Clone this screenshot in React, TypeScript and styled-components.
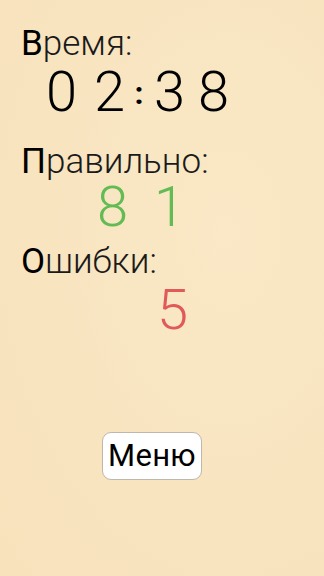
import React from "react";
import styled, { createGlobalStyle } from "styled-components";

const Global = createGlobalStyle`
  html, body { margin: 0; padding: 0; }
  body {
    background: #f9e6c3;
    font-family: Roboto, "Liberation Sans", sans-serif;
    -webkit-font-smoothing: antialiased;
  }
`;

const Screen = styled.div`
  width: 324px;
  height: 576px;
  box-sizing: border-box;
  padding-top: 26px;
  background: radial-gradient(ellipse at 70% 40%, #fae8c6 0%, #f8e4bf 60%, #f7e2bc 100%);
  display: flex;
  flex-direction: column;
  overflow: hidden;
`;

const Section = styled.section<{ $mt: number }>`
  display: flex;
  flex-direction: column;
  margin-top: ${(p) => p.$mt}px;
`;

const Label = styled.div`
  font-size: 35px;
  line-height: 35px;
  height: 35px;
  font-weight: 300;
  color: #1a1a1a;
  padding-left: 21px;
  white-space: nowrap;
`;

const Initial = styled.span`
  font-weight: 400;
  color: #000;
`;

const ValueRow = styled.div<{ $mt: number; $color: string }>`
  display: flex;
  align-items: flex-start;
  height: 56px;
  margin-top: ${(p) => p.$mt}px;
  font-size: 56px;
  line-height: 56px;
  font-weight: 300;
  color: ${(p) => p.$color};
`;

const Glyph = styled.span<{ $ml: number }>`
  display: inline-block;
  width: 30px;
  text-align: center;
  margin-left: ${(p) => p.$ml}px;
`;

const Colon = styled.span`
  display: inline-block;
  width: 30px;
  height: 24px;
  margin-top: 17px;
  font-size: 32px;
  line-height: 24px;
  font-weight: 700;
  text-align: center;
`;

const ButtonRow = styled.div`
  display: flex;
  margin-top: 94px;
  padding-left: 102px;
`;

const MenuButton = styled.button`
  width: 100px;
  height: 48px;
  box-sizing: border-box;
  background: #fff;
  border: 1px solid #bdb8ae;
  border-radius: 9px;
  font-family: Roboto, "Liberation Sans", sans-serif;
  font-size: 31px;
  font-weight: 400;
  letter-spacing: 0.3px;
  color: #000;
  padding: 0 0 2px 0;
  display: flex;
  align-items: center;
  justify-content: center;
`;

export default function App() {
  return (
    <>
      <Global />
      <Screen>
        <Section $mt={0}>
          <Label>
            <Initial>В</Initial>ремя:
          </Label>
          <ValueRow $mt={3} $color="#000">
            <Glyph $ml={46}>0</Glyph>
            <Glyph $ml={18}>2</Glyph>
            <Colon>:</Colon>
            <Glyph $ml={0}>3</Glyph>
            <Glyph $ml={14}>8</Glyph>
          </ValueRow>
        </Section>
        <Section $mt={24}>
          <Label>
            <Initial>П</Initial>равильно:
          </Label>
          <ValueRow $mt={0} $color="#63bb54">
            <Glyph $ml={97}>8</Glyph>
            <Glyph $ml={27}>1</Glyph>
          </ValueRow>
        </Section>
        <Section $mt={9}>
          <Label>
            <Initial>О</Initial>шибки:
          </Label>
          <ValueRow $mt={3} $color="#e05a5a">
            <Glyph $ml={157}>5</Glyph>
          </ValueRow>
        </Section>
        <ButtonRow>
          <MenuButton>Меню</MenuButton>
        </ButtonRow>
      </Screen>
    </>
  );
}
